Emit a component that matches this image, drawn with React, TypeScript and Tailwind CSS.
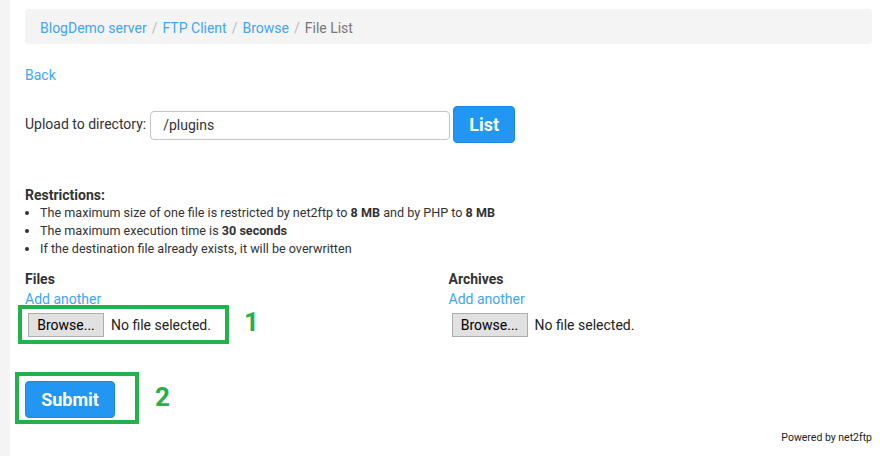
import React from "react";

export default function App() {
  return (
    <div className="flex min-h-[456px] bg-white text-[#333] font-['Roboto',sans-serif]">
      <div className="w-[10px] shrink-0 bg-[#f4f4f4]" />
      <div className="flex-1 pl-[15px] pr-[16px]">
        <div className="mt-[9px] h-[35px] rounded-[4px] bg-[#f4f4f4] px-[15px] pt-[3px] flex items-center text-[14px]">
          <span className="text-[#42a5f5]">BlogDemo server</span>
          <span className="px-[5px] text-[#bbb]">/</span>
          <span className="text-[#42a5f5]">FTP Client</span>
          <span className="px-[5px] text-[#bbb]">/</span>
          <span className="text-[#42a5f5]">Browse</span>
          <span className="px-[5px] text-[#bbb]">/</span>
          <span className="text-[#777]">File List</span>
        </div>

        <div className="mt-[22px] text-[14px] leading-[18px] text-[#42a5f5]">Back</div>

        <div className="mt-[22px] flex items-center">
          <span className="text-[14px] mr-[4px]">Upload to directory:</span>
          <div className="w-[300px] h-[29px] mt-[2px] border border-[#c4c4c4] rounded-[4px] flex items-center pl-[12px] text-[14px]">
            /plugins
          </div>
          <button className="ml-[3px] h-[37px] w-[62px] rounded-[4px] bg-[#2196f3] border border-[#1e88e5] text-white font-bold text-[18px]">
            List
          </button>
        </div>

        <div className="mt-[43px] leading-[18px]">
          <div className="font-bold text-[14px]">Restrictions:</div>
          <ul className="list-disc pl-[15px] text-[12.6px]">
            <li>
              The maximum size of one file is restricted by net2ftp to <b>8 MB</b> and by PHP to <b>8 MB</b>
            </li>
            <li>
              The maximum execution time is <b>30 seconds</b>
            </li>
            <li>If the destination file already exists, it will be overwritten</li>
          </ul>
        </div>

        <div className="mt-[12px] grid grid-cols-2">
          {["Files", "Archives"].map((t, i) => (
            <div key={t} className="relative">
              <div className="font-bold text-[14px] leading-[18px]">{t}</div>
              <div className="text-[14px] leading-[22px] text-[#42a5f5]">Add another</div>
              <div className="mt-[3px] ml-[3px] flex items-center">
                <div className="h-[24px] w-[76px] border border-[#adadad] bg-[#e1e1e1] flex items-center justify-center text-[14px] text-black">
                  Browse...
                </div>
                <span className="ml-[7px] text-[14px] text-[#222]">No file selected.</span>
              </div>
              {i === 0 && (
                <>
                  <div className="absolute left-[-7px] top-[35px] w-[211px] h-[39px] border-4 border-[#22b14c]" />
                  <div className="absolute left-[219px] top-[37px] text-[26px] font-bold leading-[30px] text-[#22b14c]">1</div>
                </>
              )}
            </div>
          ))}
        </div>

        <div className="relative mt-[44px]">
          <button className="h-[37px] w-[90px] rounded-[4px] bg-[#2196f3] border border-[#1e88e5] text-white font-bold text-[18px]">
            Submit
          </button>
          <div className="absolute left-[-10px] top-[-9px] w-[124px] h-[52px] border-4 border-[#22b14c]" />
          <div className="absolute left-[130px] top-[1px] text-[26px] font-bold leading-[30px] text-[#22b14c]">2</div>
        </div>

        <div className="mt-[12px] text-right text-[10.5px] leading-[16px] text-[#222]">Powered by net2ftp</div>
      </div>
    </div>
  );
}
